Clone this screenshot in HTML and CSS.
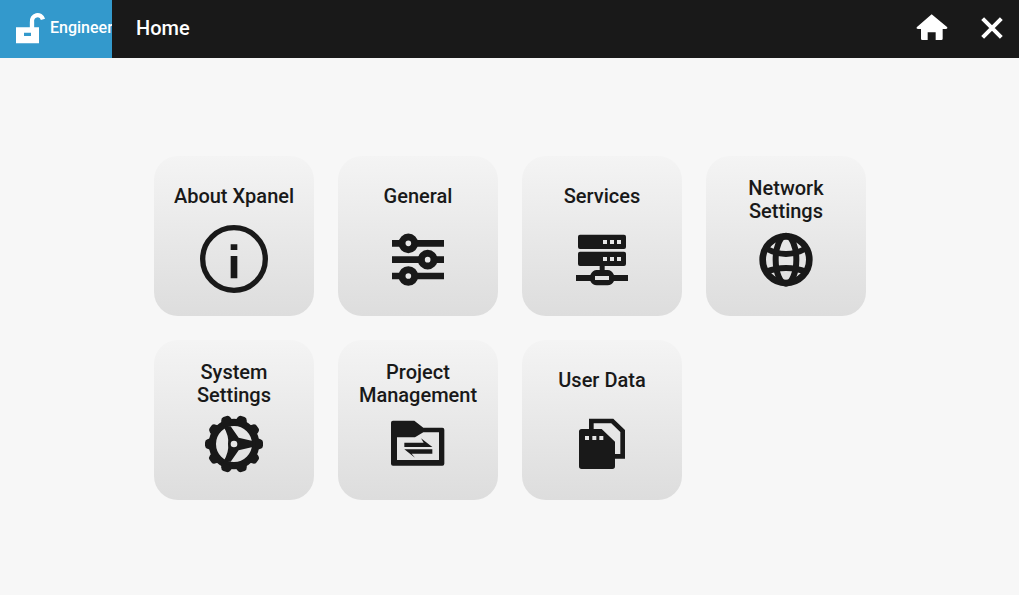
FILE: index.html
```html
<!DOCTYPE html>
<html lang="en">
<head>
<meta charset="utf-8">
<title>Home</title>
<link rel="stylesheet" href="styles.css">
</head>
<body>
<header class="topbar">
  <div class="brand">
    <svg class="brand-icon" viewBox="0 0 150 174" aria-hidden="true">
      <path class="fg-white" fill-rule="evenodd" d="M48 82H117V130H48ZM72 98V108H93V98Z"/>
      <path class="line-white" d="M96 84V66A17 18 0 0 1 129 58" stroke-width="13"/>
    </svg>
    <span class="brand-name">Engineer</span>
  </div>
  <h1 class="page-title">Home</h1>
  <div class="actions">
    <svg class="action" viewBox="15 0 162 174" aria-hidden="true">
      <path class="fg-white" fill-rule="evenodd" d="M95 43L142 82Q143 87 138 87H128V116Q128 120 124 120H107V97H83V120H67Q63 120 63 116V87H54Q48 87 50 82Z"/>
    </svg>
    <svg class="action" viewBox="195 0 162 174" aria-hidden="true">
      <path class="line-white" d="M248 56L304 112M304 56L248 112" stroke-width="12"/>
    </svg>
  </div>
</header>
<main class="content">
  <div class="grid">
    <a class="card"><span class="label">About Xpanel</span>
      <svg class="icon" viewBox="132 210 240 240" aria-hidden="true">
        <circle class="line" cx="252" cy="327" r="94" stroke-width="16"/>
        <path class="fg" d="M242 283H262V300H242ZM242 318H262V385H242Z"/>
      </svg>
    </a>
    <a class="card"><span class="label">General</span>
      <svg class="icon" viewBox="24 0 240 240" aria-hidden="true">
        <path class="line" d="M66 70H222M66 119H222M66 168H222" stroke-width="20"/>
        <circle class="knob" cx="115" cy="70" r="19" stroke-width="21"/>
        <circle class="knob" cx="173" cy="119" r="19" stroke-width="21"/>
        <circle class="knob" cx="115" cy="168" r="19" stroke-width="21"/>
      </svg>
    </a>
    <a class="card"><span class="label">Services</span>
      <svg class="icon" viewBox="21 0 240 240" aria-hidden="true">
        <path class="fg" fill-rule="evenodd" d="M75 44H207Q213 44 213 50V81Q213 87 207 87H75Q69 87 69 81V50Q69 44 75 44ZM144 60V72H156V60ZM165 60V72H177V60ZM186 60V72H198V60Z"/>
        <path class="fg" fill-rule="evenodd" d="M75 95H207Q213 95 213 101V132Q213 138 207 138H75Q69 138 69 132V101Q69 95 75 95ZM144 111V123H156V111ZM165 111V123H177V111ZM186 111V123H198V111Z"/>
        <path class="fg" fill-rule="evenodd" d="M134 138H149V150H158Q170 150 177 165H219V183H177Q170 196 158 196H125Q113 196 106 183H63V165H106Q113 150 125 150H134ZM120 168V180H162V168Z"/>
      </svg>
    </a>
    <a class="card"><span class="label label-two">Network Settings</span>
      <svg class="icon" viewBox="18 0 240 240" aria-hidden="true">
        <circle class="line" cx="138" cy="119" r="70" stroke-width="20"/>
        <ellipse class="line" cx="138" cy="119" rx="31" ry="72" stroke-width="18"/>
        <path class="line" d="M76 84Q138 120 200 84M76 156Q138 132 200 156" stroke-width="18"/>
      </svg>
    </a>
    <a class="card"><span class="label label-two">System Settings</span>
      <svg class="icon" viewBox="12 -3 240 240" aria-hidden="true">
        <defs>
          <path id="tooth" d="M196 98L210 102Q219 105 219 112V122Q219 129 210 132L196 136Z"/>
        </defs>
        <circle class="line" cx="132" cy="117" r="65" stroke-width="22"/>
        <g class="fg">
          <use href="#tooth"/>
          <use href="#tooth" transform="rotate(36 132 117)"/>
          <use href="#tooth" transform="rotate(72 132 117)"/>
          <use href="#tooth" transform="rotate(108 132 117)"/>
          <use href="#tooth" transform="rotate(144 132 117)"/>
          <use href="#tooth" transform="rotate(180 132 117)"/>
          <use href="#tooth" transform="rotate(216 132 117)"/>
          <use href="#tooth" transform="rotate(252 132 117)"/>
          <use href="#tooth" transform="rotate(288 132 117)"/>
          <use href="#tooth" transform="rotate(324 132 117)"/>
        </g>
        <path class="fg" fill-rule="evenodd" d="M100 64L122 64L146 98L188 108V126L146 136L122 170L100 170Q118 140 114 117Q118 94 100 64ZM132 107A10 10 0 1 0 132 127A10 10 0 1 0 132 107Z"/>
      </svg>
    </a>
    <a class="card"><span class="label label-two">Project Management</span>
      <svg class="icon" viewBox="9 -3 240 240" aria-hidden="true">
        <path class="fg" fill-rule="evenodd" d="M54 47H118L145 68H202Q208 68 208 74V176Q208 182 202 182H54Q48 182 48 176V53Q48 47 54 47ZM66 97V165H192V82H145L120 97Z"/>
        <path class="fg" d="M88 126H172L138 100L146 113H88ZM172 133H88L120 158L110 146H172Z"/>
      </svg>
    </a>
    <a class="card"><span class="label">User Data</span>
      <svg class="icon" viewBox="6 -3 240 240" aria-hidden="true">
        <path class="line" d="M94 72V48H157L188 78V154H165" stroke-width="14"/>
        <path class="fg" fill-rule="evenodd" d="M65 72H125L165 110V184Q165 192 157 192H65Q57 192 57 184V80Q57 72 65 72ZM75 93V105H87V93ZM97 93V105H109V93ZM118 93V105H130V93Z"/>
      </svg>
    </a>
  </div>
</main>
</body>
</html>
```
FILE: styles.css
```css
* { box-sizing: border-box; }
html, body { height: 100%; }
body {
  margin: 0;
  background: #f7f7f7;
  color: #191919;
  font-family: Roboto, "Liberation Sans", sans-serif;
  overflow: hidden;
}
.topbar {
  display: flex;
  align-items: center;
  height: 58px;
  background: #191919;
  color: #fff;
}
.brand {
  display: flex;
  align-items: center;
  flex: none;
  width: 112px;
  height: 100%;
  background: #3399cc;
  overflow: hidden;
}
.brand-icon { flex: none; width: 50px; height: 58px; }
.brand-name { padding-bottom: 3px; font-size: 16px; font-weight: 500; white-space: nowrap; }
.page-title {
  margin: 0 0 2px 24px;
  font-size: 20px;
  font-weight: 500;
  line-height: 23px;
}
.actions { display: flex; gap: 6px; margin-left: auto; }
.action { display: block; width: 54px; height: 58px; }
.fg-white { fill: #fff; }
.line-white { fill: none; stroke: #fff; }
.content { display: flex; justify-content: center; padding: 98px 0 0 1px; }
.grid { display: grid; grid-template-columns: repeat(4, 160px); grid-auto-rows: 160px; gap: 24px; }
.card {
  display: flex;
  flex-direction: column;
  align-items: center;
  padding: 29px 8px 16px;
  border-radius: 24px;
  background: linear-gradient(#f4f4f4, #dddddd);
  text-align: center;
}
.label { font-size: 20px; font-weight: 500; line-height: 23px; }
.label-two { margin: -8px 0 -4px; }
.icon { display: block; flex: none; width: 80px; height: 80px; margin-top: auto; }
.fg { fill: #191919; }
.line { fill: none; stroke: #191919; }
.knob { fill: #e9e9e9; stroke: #191919; }
```
